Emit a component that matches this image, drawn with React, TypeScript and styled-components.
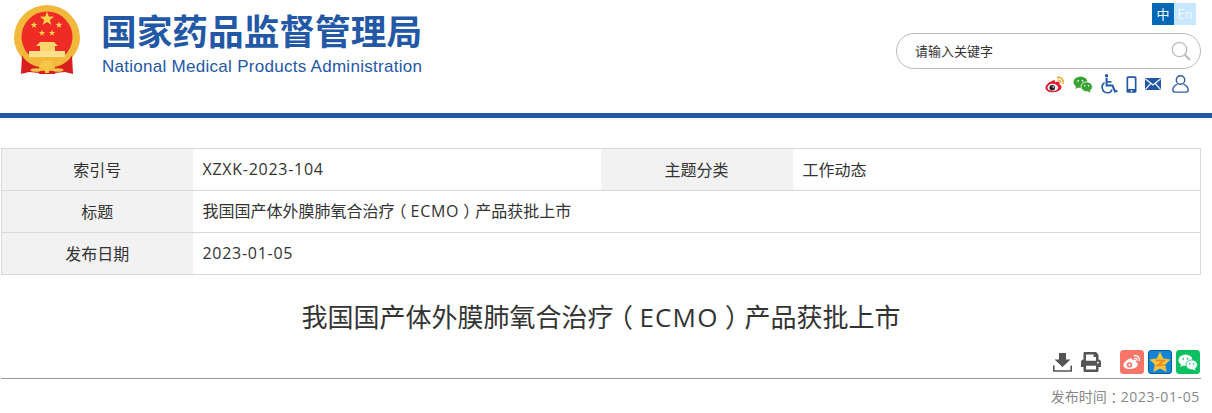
import styled, { createGlobalStyle } from "styled-components";
import { FaPrint } from "react-icons/fa";

const Colors = {
  blue: "#2358a6",
  line: "#d9d9d9",
  label: "#f2f2f2",
  text: "#333333",
};

const GlobalStyle = createGlobalStyle`
  body {
    margin: 0;
    background: #ffffff;
    font-family: "Noto Sans CJK SC", "Open Sans", sans-serif;
    color: ${Colors.text};
  }
`;

function starPoints(cx: number, cy: number, r: number) {
  const points: string[] = [];
  for (let i = 0; i < 10; i++) {
    const radius = i % 2 === 0 ? r : r * 0.4;
    const angle = (Math.PI / 5) * i - Math.PI / 2;
    points.push(`${cx + radius * Math.cos(angle)},${cy + radius * Math.sin(angle)}`);
  }
  return points.join(" ");
}

function Emblem() {
  return (
    <svg width="68" height="72" viewBox="0 0 68 72">
      <path d="M1 33 A33 33 0 0 1 67 33 C67 42 62 50 56 56 L44 66 L24 66 L12 56 C6 50 1 42 1 33 Z" fill="#f2b83c" />
      <path d="M18.2 52 A25.5 25.5 0 1 1 49.8 52 Z" fill="#ef2b26" />
      <polygon points={starPoints(34, 14, 7.5)} fill="#ffd34e" />
      <polygon points={starPoints(21, 20, 3.6)} fill="#ffd34e" />
      <polygon points={starPoints(46, 20, 3.6)} fill="#ffd34e" />
      <polygon points={starPoints(29, 28, 3.4)} fill="#ffd34e" />
      <polygon points={starPoints(39, 28, 3.4)} fill="#ffd34e" />
      <path d="M27 37 L41 37 L45 41 L42 41 L42 46 L27 46 L27 41 L23 41 Z" fill="#fbd46c" />
      <rect x="16" y="46" width="36" height="6" fill="#fde08a" />
      <path d="M9 50 C12 56 18 60 26 62 L26 68 L16 67 L8 69 Z" fill="#d81e1e" />
      <path d="M59 50 C56 56 50 60 42 62 L42 68 L52 67 L60 69 Z" fill="#d81e1e" />
      <rect x="26" y="66" width="16" height="3" fill="#d81e1e" />
      <path d="M9 49 Q34 68 59 49" fill="none" stroke="#f2b83c" strokeWidth="2.5" />
      <ellipse cx="34" cy="60" rx="7" ry="4.5" fill="#f7c64a" />
      <ellipse cx="23" cy="65" rx="5.5" ry="1.8" fill="#f7c64a" />
      <ellipse cx="45" cy="65" rx="5.5" ry="1.8" fill="#f7c64a" />
      <rect x="32" y="62" width="4" height="6" fill="#f7c64a" />
    </svg>
  );
}

function SearchIcon() {
  return (
    <svg width="20" height="20" viewBox="0 0 20 20" fill="none" stroke="#bbbbbb">
      <circle cx="8.5" cy="8.5" r="7.2" strokeWidth="1.3" />
      <path d="M13.8 13.8 L19 19" strokeWidth="2" />
    </svg>
  );
}

function WeiboIcon() {
  return (
    <svg width="20" height="17" viewBox="0 0 20 17">
      <path d="M8 4.5 C3.5 6 0.3 9.5 0.5 12 C0.8 15 4.5 16.5 8.5 16.3 C13 16 16.5 13.6 16.5 11 C16.5 9.4 15 8.8 14.4 8.5 C15 7 14.5 5.8 12.6 5.8 C11.4 5.8 10.2 6.4 10 6.3 C10.3 4.2 9.4 4 8 4.5 Z" fill="#e6162d" />
      <ellipse cx="7.8" cy="11.5" rx="5.4" ry="3.7" fill="#ffffff" />
      <circle cx="7.2" cy="11.7" r="2.8" fill="#222222" />
      <circle cx="8.2" cy="11" r="0.8" fill="#ffffff" />
      <path d="M12 1.6 C16 0.6 19 3.6 18.3 7.6" fill="none" stroke="#f5a623" strokeWidth="1.6" />
      <path d="M12.6 4.4 C14.6 4 16 5.2 15.7 7.2" fill="none" stroke="#f5a623" strokeWidth="1.4" />
    </svg>
  );
}

function WechatIcon({ bubble, eye }: { bubble: string; eye: string }) {
  return (
    <svg width="20" height="17" viewBox="0 0 20 17">
      <ellipse cx="7.5" cy="6.2" rx="7" ry="5.7" fill={bubble} />
      <path d="M3 10 L2.4 13 L6 11 Z" fill={bubble} />
      <ellipse cx="13.7" cy="10.8" rx="5.7" ry="4.9" fill={bubble} stroke={eye} strokeWidth="0.8" />
      <path d="M16.5 14 L17.5 16.8 L14 15 Z" fill={bubble} />
      <circle cx="5.2" cy="4.8" r="0.9" fill={eye} />
      <circle cx="9.6" cy="4.8" r="0.9" fill={eye} />
      <circle cx="11.8" cy="9.8" r="0.8" fill={eye} />
      <circle cx="15.6" cy="9.8" r="0.8" fill={eye} />
    </svg>
  );
}

function WheelchairIcon() {
  return (
    <svg width="17" height="20" viewBox="0 0 17 20" fill="none" stroke={Colors.blue}>
      <circle cx="5.6" cy="1.8" r="1.7" fill={Colors.blue} stroke="none" />
      <path d="M5.6 4 L5.6 11.5 L11.5 11.5 L14 17.6 L16.4 16.8" strokeWidth="2" />
      <path d="M5.6 7.8 L10.5 7.8" strokeWidth="1.6" />
      <path d="M3.6 8.6 C-0.4 10.8 0.6 18.6 6.2 18.8 C8.8 18.8 10.4 17.2 11 15.4" strokeWidth="1.6" />
    </svg>
  );
}

function PhoneIcon() {
  return (
    <svg width="11" height="17" viewBox="0 0 11 17">
      <rect x="0.5" y="0.2" width="10" height="16.6" rx="1.6" fill={Colors.blue} />
      <rect x="2.2" y="2" width="6.6" height="11" fill="#ffffff" />
      <circle cx="5.5" cy="14.9" r="0.9" fill="#ffffff" />
    </svg>
  );
}

function MailIcon() {
  return (
    <svg width="16" height="12" viewBox="0 0 16 12">
      <rect x="0" y="0" width="16" height="12" rx="0.8" fill={Colors.blue} />
      <path d="M0.5 1 L8 7 L15.5 1 M0.5 11.4 L5.6 5.6 M15.5 11.4 L10.4 5.6" fill="none" stroke="#ffffff" strokeWidth="1.2" />
    </svg>
  );
}

function UserIcon() {
  return (
    <svg width="17" height="18" viewBox="0 0 17 18" fill="none" stroke="#2f5aa8" strokeWidth="1.4">
      <circle cx="8.5" cy="5" r="4.2" />
      <path d="M5.5 9.4 C2.4 10.4 0.8 12.6 0.8 15 C0.8 16.4 1.6 17.1 3 17.1 L14 17.1 C15.4 17.1 16.2 16.4 16.2 15 C16.2 12.6 14.6 10.4 11.5 9.4" />
    </svg>
  );
}

function DownloadIcon() {
  return (
    <svg width="19" height="19" viewBox="0 0 19 19" fill="#555555">
      <path d="M6 0 L13 0 L13 6.5 L17.5 6.5 L9.5 14 L1.5 6.5 L6 6.5 Z" />
      <path d="M0.8 12.5 L0.8 18 L18.2 18 L18.2 12.5" fill="none" stroke="#555555" strokeWidth="1.6" />
    </svg>
  );
}

function ShareWeibo() {
  return (
    <svg width="18" height="16" viewBox="0 0 20 17">
      <path d="M8 4.5 C3.5 6 0.3 9.5 0.5 12 C0.8 15 4.5 16.5 8.5 16.3 C13 16 16.5 13.6 16.5 11 C16.5 9.4 15 8.8 14.4 8.5 C15 7 14.5 5.8 12.6 5.8 C11.4 5.8 10.2 6.4 10 6.3 C10.3 4.2 9.4 4 8 4.5 Z" fill="#ffffff" />
      <circle cx="7.2" cy="11.7" r="3" fill="#fb7468" />
      <circle cx="7.2" cy="11.7" r="1.2" fill="#ffffff" />
      <path d="M12 1.6 C16 0.6 19 3.6 18.3 7.6" fill="none" stroke="#ffffff" strokeWidth="1.6" />
      <path d="M12.6 4.4 C14.6 4 16 5.2 15.7 7.2" fill="none" stroke="#ffffff" strokeWidth="1.4" />
    </svg>
  );
}

function ShareQzone() {
  return (
    <svg width="22" height="22" viewBox="0 0 22 22">
      <path d="M11 0.5 L14.2 7.4 L21.5 8.4 L16.2 13.5 L17.6 21 L11 17.4 L4.4 21 L5.8 13.5 L0.5 8.4 L7.8 7.4 Z" fill="#f8c23a" />
      <path d="M7 9.5 L15 9.5 L8.5 14.5 L15.5 14" fill="none" stroke="#ef8a1f" strokeWidth="1.6" />
    </svg>
  );
}

const rows = [
  { label: "标题" },
  { label: "发布日期", value: "2023-01-05" },
];

function DrugTitle() {
  return (
    <>
      我国国产体外膜肺氧合治疗<Punct>（</Punct>
      <Latin>ECMO</Latin>
      <Punct>）</Punct>产品获批上市
    </>
  );
}

function App() {
  return (
    <>
      <GlobalStyle />
      <Header>
        <Brand>
          <Emblem />
          <BrandText>
            <BrandName>国家药品监督管理局</BrandName>
            <BrandEnglish>National Medical Products Administration</BrandEnglish>
          </BrandText>
        </Brand>
        <Tools>
          <LangSwitch>
            <LangItem $active>中</LangItem>
            <LangItem>En</LangItem>
          </LangSwitch>
          <SearchBox>
            <SearchHint>请输入关键字</SearchHint>
            <SearchIcon />
          </SearchBox>
          <SocialRow>
            <WeiboIcon />
            <WechatIcon bubble="#3aa335" eye="#ffffff" />
            <WheelchairIcon />
            <PhoneIcon />
            <MailIcon />
            <UserIcon />
          </SocialRow>
        </Tools>
      </Header>
      <Main>
        <InfoTable>
          <colgroup>
            <col width="191" />
            <col width="408" />
            <col width="192" />
            <col />
          </colgroup>
          <tbody>
            <tr>
              <LabelCell>索引号</LabelCell>
              <ValueCell>
                <Latin>XZXK-2023-104</Latin>
              </ValueCell>
              <LabelCell>主题分类</LabelCell>
              <ValueCell>工作动态</ValueCell>
            </tr>
            {rows.map((row) => (
              <tr key={row.label}>
                <LabelCell>{row.label}</LabelCell>
                <ValueCell colSpan={3}>
                  {row.value ? <Latin>{row.value}</Latin> : <DrugTitle />}
                </ValueCell>
              </tr>
            ))}
          </tbody>
        </InfoTable>
        <ArticleTitle>
          <DrugTitle />
        </ArticleTitle>
        <ActionBar>
          <ActionGroup>
            <DownloadIcon />
            <FaPrint size={20} color="#555555" />
          </ActionGroup>
          <ShareGroup>
            <ShareTile $bg="#fb7468" $edge="#fb7468">
              <ShareWeibo />
            </ShareTile>
            <ShareTile $bg="#0f86d8" $edge="#0b5fa5">
              <ShareQzone />
            </ShareTile>
            <ShareTile $bg="#0bc15f" $edge="#0bc15f">
              <WechatIcon bubble="#ffffff" eye="#0bc15f" />
            </ShareTile>
          </ShareGroup>
        </ActionBar>
        <PublishTime>
          发布时间<Punct>：</Punct>
          <Latin>2023-01-05</Latin>
        </PublishTime>
      </Main>
    </>
  );
}

const Header = styled.header`
  display: flex;
  justify-content: space-between;
  height: 113px;
  border-bottom: 5px solid ${Colors.blue};
`;

const Brand = styled.div`
  display: flex;
  align-items: flex-start;
  gap: 21px;
  padding: 5px 0 0 13px;
`;

const BrandText = styled.div`
  display: flex;
  flex-direction: column;
  width: 322px;
  margin-left: -1px;
  padding-top: 1px;
`;

const BrandName = styled.div`
  font-size: 35.7px;
  line-height: 48px;
  font-weight: 700;
  color: ${Colors.blue};
  white-space: nowrap;
`;

const BrandEnglish = styled.div`
  margin: 3px 0 0 1px;
  font-family: "Liberation Sans", sans-serif;
  font-size: 17px;
  line-height: 20px;
  letter-spacing: 0.28px;
  color: ${Colors.blue};
  white-space: nowrap;
`;

const Tools = styled.div`
  display: flex;
  flex-direction: column;
  align-items: flex-end;
  padding-top: 3px;
  padding-right: 11px;
`;

const LangSwitch = styled.div`
  display: flex;
  margin-right: 5px;
`;

const LangItem = styled.div<{ $active?: boolean }>`
  width: 22px;
  height: 22px;
  line-height: 22px;
  text-align: center;
  font-size: 13px;
  color: ${(p) => (p.$active ? "#ffffff" : "#eef8ff")};
  background: ${(p) => (p.$active ? "#0068b7" : "#c7e7ff")};
`;

const SearchBox = styled.div`
  display: flex;
  align-items: center;
  justify-content: space-between;
  box-sizing: border-box;
  width: 305px;
  height: 36px;
  margin-top: 8px;
  padding: 0 9px 0 18px;
  border: 1px solid #bbbbbb;
  border-radius: 18px;
`;

const SearchHint = styled.span`
  padding-bottom: 2px;
  font-size: 13px;
  color: ${Colors.text};
`;

const SocialRow = styled.div`
  display: flex;
  align-items: center;
  gap: 8px;
  height: 20px;
  margin-top: 5px;
  margin-right: 12px;
  svg:last-child {
    margin-left: 3px;
  }
`;

const Main = styled.main`
  display: flex;
  flex-direction: column;
  width: 1200px;
  margin: 30px 0 0 1px;
`;

const InfoTable = styled.table`
  width: 100%;
  table-layout: fixed;
  border-collapse: collapse;
  font-size: 16px;
  line-height: 20px;
  color: ${Colors.text};
`;

const LabelCell = styled.td`
  box-sizing: border-box;
  height: 42px;
  padding: 0 0 2px;
  text-align: center;
  background: ${Colors.label};
  border-top: 1px solid ${Colors.line};
  border-bottom: 1px solid ${Colors.line};
  &:first-child {
    border-left: 1px solid ${Colors.line};
  }
`;

const ValueCell = styled.td`
  padding: 0 0 2px 10px;
  border-top: 1px solid ${Colors.line};
  border-bottom: 1px solid ${Colors.line};
  &:last-child {
    border-right: 1px solid ${Colors.line};
  }
`;

const Latin = styled.span`
  font-family: "Open Sans", sans-serif;
  letter-spacing: 0.045em;
`;

const Punct = styled.span`
  display: inline-block;
  width: 1em;
  text-align: center;
  font-feature-settings: "halt";
`;

const ArticleTitle = styled.h1`
  margin: 19px 0 0;
  font-size: 26px;
  line-height: 44px;
  font-weight: 400;
  text-align: center;
  color: ${Colors.text};
`;

const ActionBar = styled.div`
  display: flex;
  justify-content: flex-end;
  align-items: flex-start;
  gap: 19px;
  height: 40px;
  padding: 11px 1px 0 0;
  box-sizing: border-box;
  border-bottom: 1px solid #999999;
`;

const ActionGroup = styled.div`
  display: flex;
  align-items: center;
  gap: 9px;
  height: 24px;
`;

const ShareGroup = styled.div`
  display: flex;
  gap: 4px;
`;

const ShareTile = styled.div<{ $bg: string; $edge: string }>`
  display: flex;
  align-items: center;
  justify-content: center;
  box-sizing: border-box;
  width: 24px;
  height: 24px;
  border: 1px solid ${(p) => p.$edge};
  border-radius: 3px;
  background: ${(p) => p.$bg};
`;

const PublishTime = styled.div`
  margin-top: 7px;
  padding-right: 1px;
  font-size: 14px;
  line-height: 20px;
  text-align: right;
  color: #888888;
`;

export default App;
